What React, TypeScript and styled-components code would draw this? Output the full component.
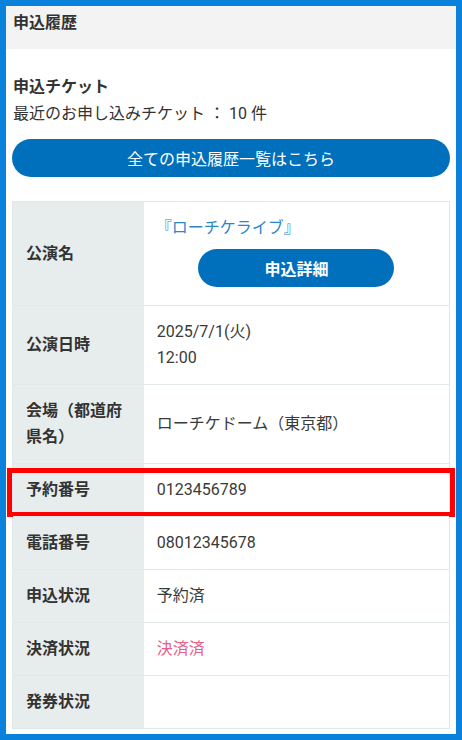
import React from "react";
import styled, { createGlobalStyle } from "styled-components";

const GlobalStyle = createGlobalStyle`
  html, body {
    margin: 0;
    padding: 0;
    background: #ffffff;
  }
  body {
    font-family: Roboto, "Noto Sans CJK JP", sans-serif;
    color: #333333;
  }
  * { box-sizing: border-box; }
`;

const Frame = styled.div`
  width: 462px;
  height: 740px;
  border: 6px solid #0a82dc;
  background: #ffffff;
  overflow: hidden;
`;

const Header = styled.div`
  height: 43px;
  background: #f3f3f3;
  padding: 3px 7px 0;
  font-size: 16px;
  line-height: 28px;
  font-weight: 700;
  color: #333333;
`;

const Content = styled.div`
  padding: 25px 6px 0;
`;

const SectionTitle = styled.div`
  font-size: 16px;
  line-height: 26px;
  font-weight: 700;
  padding-left: 1px;
`;

const Summary = styled.div`
  font-size: 16px;
  line-height: 27px;
  padding-left: 1px;
`;

const PillButton = styled.button<{ $bold?: boolean; $width?: string }>`
  display: flex;
  align-items: center;
  justify-content: center;
  width: ${(p) => p.$width ?? "100%"};
  height: 38px;
  border: none;
  border-radius: 19px;
  background: #0070bd;
  color: #ffffff;
  font-family: Roboto, "Noto Sans CJK JP", sans-serif;
  font-size: 16px;
  font-weight: ${(p) => (p.$bold ? 700 : 400)};
  padding: 0;
  cursor: pointer;
`;

const ListButtonWrap = styled.div`
  margin-top: 12px;
`;

const Table = styled.div`
  margin-top: 24px;
  border: 1px solid #e2e7e9;
`;

const Row = styled.div<{ $highlight?: boolean }>`
  position: relative;
  display: grid;
  grid-template-columns: 30% 1fr;
  border-top: 1px solid #e2e7e9;
  &:first-child {
    border-top: none;
  }
`;

const Label = styled.div`
  background: #e7ecec;
  padding: 13px 13px;
  font-size: 16px;
  line-height: 26px;
  font-weight: 700;
  color: #333333;
  display: flex;
  align-items: center;
`;

const Value = styled.div<{ $tone?: "pink" }>`
  padding: 13px 13px;
  font-size: 16px;
  line-height: 26px;
  color: ${(p) => (p.$tone === "pink" ? "#e6608a" : "#3a3a3a")};
  display: flex;
  flex-direction: column;
  justify-content: center;
  min-height: 52px;
`;

const TitleLink = styled.a`
  color: #2a87c8;
  text-decoration: none;
  margin-left: -1px;
`;

const DetailWrap = styled.div`
  display: flex;
  justify-content: center;
  margin: 8px 0 5px;
`;

const Highlight = styled.div`
  position: absolute;
  top: 4px;
  bottom: -1px;
  left: -6px;
  right: -6px;
  border: 5px solid #ff0000;
  pointer-events: none;
`;

type RowData = {
  label: string;
  value: React.ReactNode;
  tone?: "pink";
  highlight?: boolean;
};

const rows: RowData[] = [
  { label: "公演日時", value: (<><span>2025/7/1(火)</span><span>12:00</span></>) },
  { label: "会場（都道府県名）", value: "ローチケドーム（東京都）" },
  { label: "予約番号", value: "0123456789", highlight: true },
  { label: "電話番号", value: "08012345678" },
  { label: "申込状況", value: "予約済" },
  { label: "決済状況", value: "決済済", tone: "pink" },
  { label: "発券状況", value: "" },
];

export default function App() {
  return (
    <>
      <GlobalStyle />
      <Frame>
        <Header>申込履歴</Header>
        <Content>
          <SectionTitle>申込チケット</SectionTitle>
          <Summary>最近のお申し込みチケット ： 10 件</Summary>
          <ListButtonWrap>
            <PillButton>全ての申込履歴一覧はこちら</PillButton>
          </ListButtonWrap>
          <Table>
            <Row>
              <Label>公演名</Label>
              <Value>
                <TitleLink href="#">『ローチケライブ』</TitleLink>
                <DetailWrap>
                  <PillButton $bold $width="196px">申込詳細</PillButton>
                </DetailWrap>
              </Value>
            </Row>
            {rows.map((r) => (
              <Row key={r.label}>
                <Label>{r.label}</Label>
                <Value $tone={r.tone}>{r.value}</Value>
                {r.highlight && <Highlight />}
              </Row>
            ))}
          </Table>
        </Content>
      </Frame>
    </>
  );
}
